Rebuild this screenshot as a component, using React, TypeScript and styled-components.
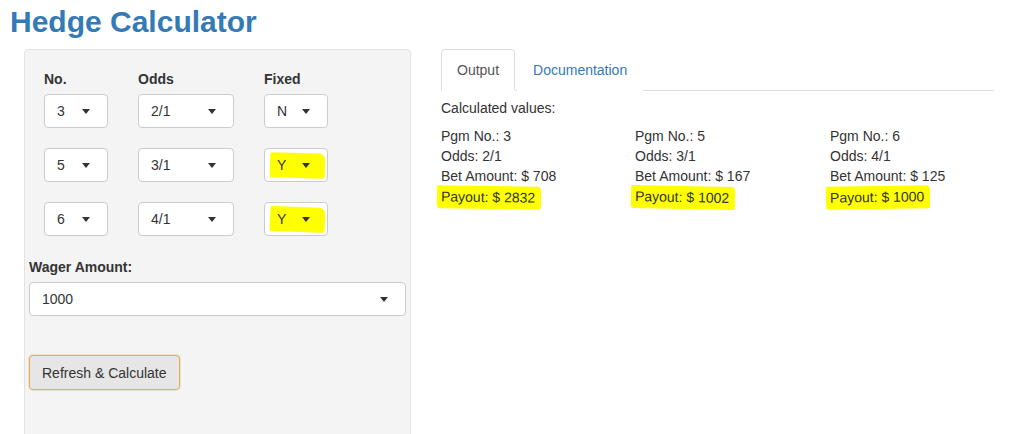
import React from 'react';
import styled, { createGlobalStyle } from 'styled-components';

const GlobalStyle = createGlobalStyle`
  html, body {
    margin: 0;
    padding: 0;
    background: #fff;
    font-family: "Liberation Sans", Arial, sans-serif;
    font-size: 14px;
    line-height: 20px;
    color: #333;
    overflow: hidden;
  }
  * { box-sizing: border-box; }
`;

const Page = styled.div`
  width: 1014px;
  height: 434px;
  overflow: hidden;
`;

const Title = styled.h2`
  margin: 5px 0 11px 10px;
  font-size: 30px;
  line-height: 33px;
  font-weight: 700;
  color: #337ab7;
`;

const Layout = styled.div`
  display: grid;
  grid-template-columns: 387px 553px;
  column-gap: 30px;
  padding-left: 24px;
`;

const Sidebar = styled.div`
  height: 420px;
  background: #f4f4f4;
  border: 1px solid #e3e3e3;
  border-radius: 4px;
  padding: 19px 4px 0 4px;
`;

const PickGrid = styled.div`
  display: grid;
  grid-template-columns: 94px 126px 1fr;
  row-gap: 20px;
  padding-left: 15px;
`;

const Label = styled.div`
  font-weight: 700;
  margin-bottom: 5px;
`;

const HeadCell = styled.div`
  margin-bottom: -20px;
`;

const SelectBox = styled.div<{ $width?: number }>`
  position: relative;
  width: ${({ $width }) => ($width ? `${$width}px` : '100%')};
  height: 34px;
  background: #fff;
  border: 1px solid #ccc;
  border-radius: 4px;
  padding: 6px 12px;
  display: flex;
  align-items: center;
  color: #333;
`;

const SelectValue = styled.span`
  position: relative;
  z-index: 1;
`;

const Caret = styled.span`
  position: absolute;
  z-index: 1;
  right: 17px;
  top: 14px;
  width: 0;
  height: 0;
  border-style: solid;
  border-width: 5px 4.5px 0 4.5px;
  border-color: #333 transparent transparent transparent;
`;

const Marker = styled.span<{ $tilt: number }>`
  position: absolute;
  left: 5px;
  right: 2px;
  top: 4px;
  bottom: 3px;
  background: #ffff00;
  border-radius: 2px 6px 3px 1px;
  transform: rotate(${({ $tilt }) => $tilt}deg);
`;

const WagerGroup = styled.div`
  margin-top: 21px;
`;

const CalcButton = styled.button`
  margin-top: 39px;
  height: 35px;
  padding: 6px 12px;
  font-family: inherit;
  font-size: 14px;
  line-height: 20px;
  color: #333;
  background: #e6e6e6;
  border: 1px solid #e2ae5c;
  border-radius: 4px;
  box-shadow: 0 0 0 1px rgba(236, 190, 110, 0.35);
`;

const Main = styled.div``;

const TabBar = styled.div`
  display: flex;
  gap: 2px;
  border-bottom: 1px solid #ddd;
  height: 42px;
`;

const Tab = styled.div<{ $active?: boolean }>`
  height: 42px;
  padding: 10px 15px;
  border: 1px solid ${({ $active }) => ($active ? '#ddd' : 'transparent')};
  border-bottom-color: ${({ $active }) => ($active ? '#fff' : 'transparent')};
  border-radius: 4px 4px 0 0;
  background: #fff;
  color: ${({ $active }) => ($active ? '#555' : '#337ab7')};
`;

const Intro = styled.div`
  margin-top: 7px;
`;

const Results = styled.div`
  display: grid;
  grid-template-columns: 194px 195px 1fr;
  margin-top: 8px;
`;

const Line = styled.div``;

const Highlight = styled.span<{ $tilt: number }>`
  display: inline-block;
  background: #ffff00;
  padding: 1px 6px 2px 4px;
  margin-left: -4px;
  border-radius: 1px 4px 2px 3px;
  transform: rotate(${({ $tilt }) => $tilt}deg);
`;

const picks = [
  { no: '3', odds: '2/1', fixed: 'N', mark: false, tilt: 0 },
  { no: '5', odds: '3/1', fixed: 'Y', mark: true, tilt: 1.5 },
  { no: '6', odds: '4/1', fixed: 'Y', mark: true, tilt: 2 },
];

const results = [
  { no: 3, odds: '2/1', bet: 708, payout: 2832, tilt: 0.8 },
  { no: 5, odds: '3/1', bet: 167, payout: 1002, tilt: 1.2 },
  { no: 6, odds: '4/1', bet: 125, payout: 1000, tilt: -0.8 },
];

const Select: React.FC<{ value: string; width?: number; mark?: boolean; tilt?: number }> = ({ value, width, mark, tilt = 0 }) => (
  <SelectBox $width={width}>
    {mark && <Marker $tilt={tilt} />}
    <SelectValue>{value}</SelectValue>
    <Caret />
  </SelectBox>
);

export default function App() {
  return (
    <Page>
      <GlobalStyle />
      <Title>Hedge Calculator</Title>
      <Layout>
        <Sidebar>
          <PickGrid>
            <HeadCell><Label>No.</Label></HeadCell>
            <HeadCell><Label>Odds</Label></HeadCell>
            <HeadCell><Label>Fixed</Label></HeadCell>
            {picks.map((p) => (
              <React.Fragment key={p.no}>
                <Select value={p.no} width={64} />
                <Select value={p.odds} width={96} />
                <Select value={p.fixed} width={64} mark={p.mark} tilt={p.tilt} />
              </React.Fragment>
            ))}
          </PickGrid>
          <WagerGroup>
            <Label>Wager Amount:</Label>
            <Select value="1000" width={377} />
          </WagerGroup>
          <CalcButton>Refresh &amp; Calculate</CalcButton>
        </Sidebar>
        <Main>
          <TabBar>
            <Tab $active>Output</Tab>
            <Tab>Documentation</Tab>
          </TabBar>
          <Intro>Calculated values:</Intro>
          <Results>
            {results.map((r) => (
              <div key={r.no}>
                <Line>Pgm No.: {r.no}</Line>
                <Line>Odds: {r.odds}</Line>
                <Line>Bet Amount: $ {r.bet}</Line>
                <Line>
                  <Highlight $tilt={r.tilt}>Payout: $ {r.payout}</Highlight>
                </Line>
              </div>
            ))}
          </Results>
        </Main>
      </Layout>
    </Page>
  );
}
